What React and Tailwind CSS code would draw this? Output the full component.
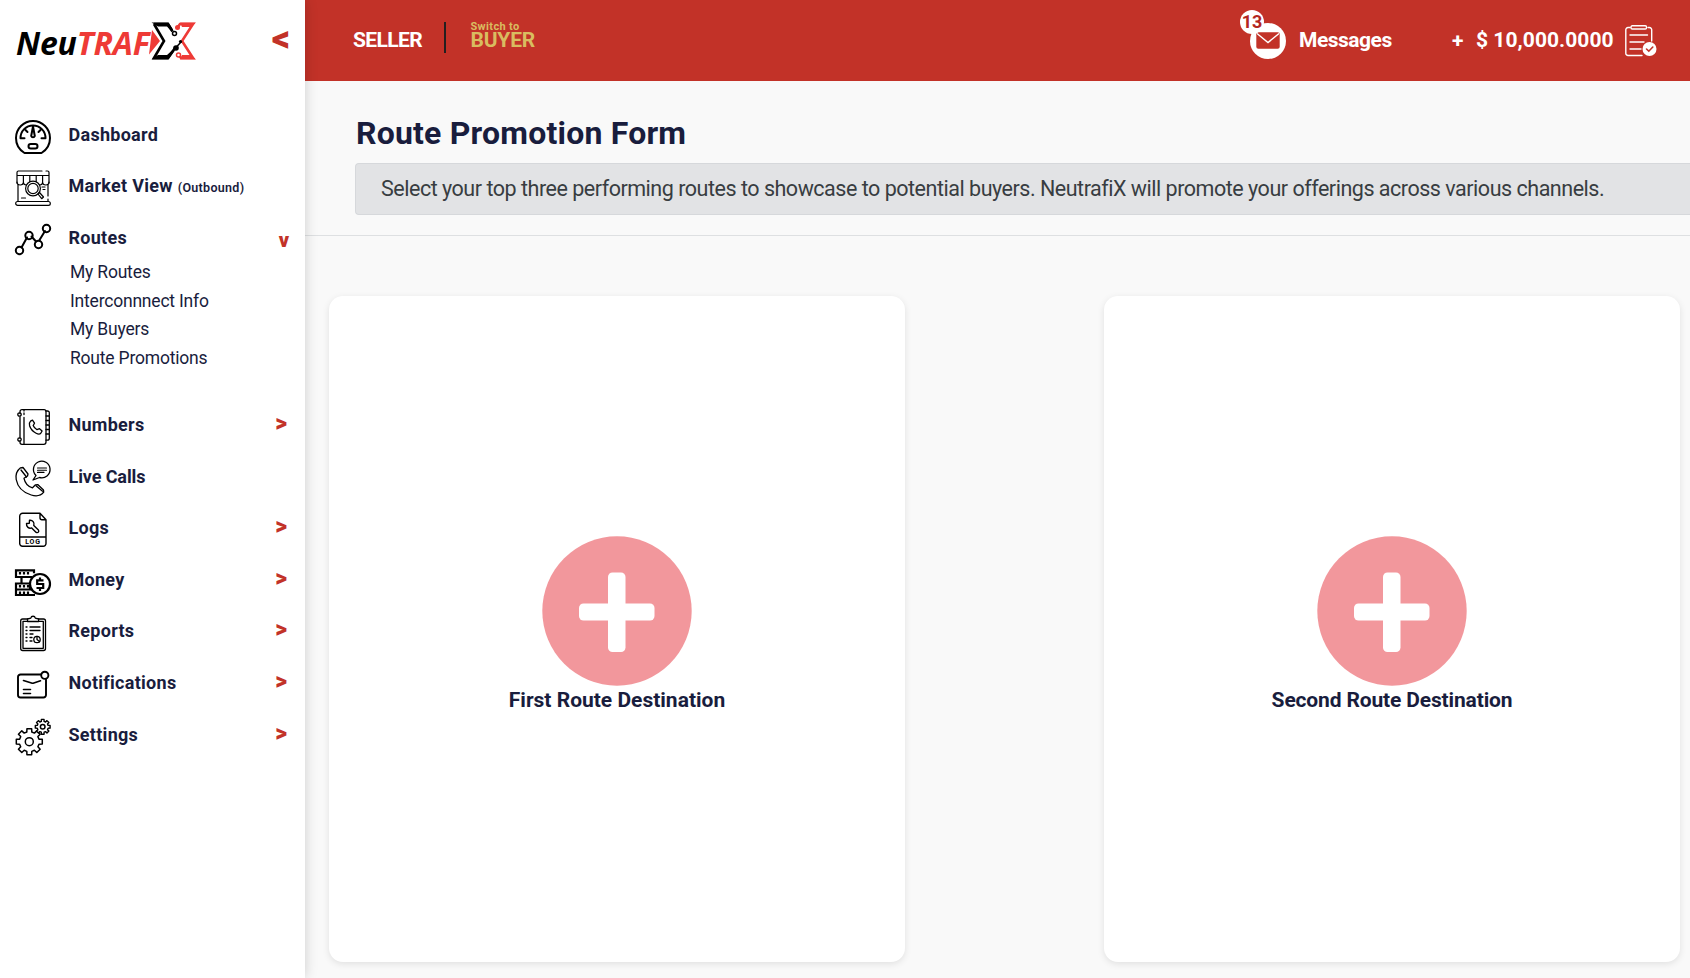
import React from "react";

const Svg = ({children, size = 36, sw = 1.4}) => (
  <svg width={size} height={size} viewBox={`0 0 ${size} ${size}`} fill="none" stroke="#000" strokeWidth={sw} strokeLinecap="round" strokeLinejoin="round" className="shrink-0 overflow-visible">
    {children}
  </svg>
);

const DashboardIcon = () => (
  <Svg sw={2}>
    <path d="M9.5 34C4.500 31 1 25.500 1 19a17 17 0 0 1 34 0c0 6.500-3.500 12-8.500 15z" />
    <path d="M5.500 19.300h4M30.500 19.300h-4M5.500 19.300C5.500 12 11 6.500 18 6.500S30.500 12 30.500 19.300M10.500 11l2 2M25.500 11l-2 2" />
    <path d="M18 7.500l-1.800 9.500a1.900 1.900 0 0 0 3.600 0z" />
    <rect x="13.500" y="25" width="9" height="4.600" rx="2.300" />
  </Svg>
);

const MarketIcon = () => (
  <Svg sw={1.2}>
    <path d="M3 1h24M31 1h1.500a1.500 1.500 0 0 1 1.500 1.500V13M2 13V2.500A1.500 1.500 0 0 1 3.500 1M2 5.500h32" />
    <path d="M2 12c0 4 6.400 4 6.400 0V5.500M8.400 12c0 4 6.400 4 6.400 0V5.500M14.800 11c0 2 6.400 2 6.400 0V5.500M21.200 12c0 4 6.400 4 6.400 0V5.500M27.600 12c0 4 6.400 4 6.400 0" />
    <path d="M3 15v16.500M33 15v11M33 29v2.500M6.500 28h4M27 17h3M28 19.500h2" />
    <rect x=".7" y="31.500" width="34.600" height="3.800" rx="1.900" />
    <circle cx="18" cy="18.500" r="7.400" fill="#fff" />
    <circle cx="18" cy="18.500" r="5.200" />
    <path d="M23 24l1.500-1.500L28.500 27l-1.800 1.700z" />
  </Svg>
);

const RoutesIcon = () => (
  <Svg sw={2}>
    <g transform="translate(0 1)">
      <path d="M6.500 24.500L12 14.500M16.500 13.500L21 18.500M24.500 17L30 8" />
      <circle cx="4.500" cy="27.500" r="3.700" />
      <circle cx="14" cy="12.500" r="3.700" />
      <circle cx="23.500" cy="21.500" r="3.700" />
      <circle cx="31.500" cy="5.500" r="3.700" />
    </g>
  </Svg>
);

const NumbersIcon = () => (
  <Svg sw={1.3}>
    <path d="M5 4.500V2.700A2 2 0 0 1 7 .7h22a2 2 0 0 1 2 2V33a2.300 2.300 0 0 1-2.300 2.300H7a2 2 0 0 1-2-2V32M5 8v21M9 8.500V35" />
    <path d="M9 1v1M9 4v1.500" />
    <path d="M31 2h1.500a1.800 1.800 0 0 1 1.800 1.800v25.400a2 2 0 0 1-2 2H31M31 7h3M31 11.500h3M31 16h3M31 20.500h3M31 25h3" />
    <circle cx="4.500" cy="5.500" r="1.700" />
    <circle cx="4.500" cy="30.500" r="1.700" />
    <path d="M15.500 12.200l2-1 2 3-1.300 2.300c.8 2 2 3.200 3.800 4.200l2.500-1 2.600 2.300-1.500 2.500c-1.200 1-3 .5-4.500-.3-3-1.600-5.500-4.300-6.500-7.500-.5-1.900-.2-3.500.9-4.500z" />
  </Svg>
);

const CallsIcon = () => (
  <Svg sw={1.3}>
    <path d="M5.500 6.800L8 6.500l5 6.500-.5 2-3.500 2.300c1 4.700 4 8.200 8.500 9.500l3-3 2.200-.2 5.800 5.400.2 2.200c-2.500 3.200-7.500 4.300-12.500 2.800C8 31.500 2.500 25.500 1.200 18.500.5 14 2 9.500 5.500 6.800z" />
    <path d="M6 9l5.500 7M21 24.800l6.500 5.400" />
    <path d="M21 14.500l-3 4.500 6.500-2.500A8.300 8.300 0 1 0 21 14.500z" />
    <path d="M22.500 7h9M22.500 9.200h9M22.500 11.400h6.500" strokeWidth="1.100" />
  </Svg>
);

const LogsIcon = () => (
  <Svg sw={1.4}>
    <path d="M8 1.200h17l6 6.500V31.500a2.800 2.800 0 0 1-2.800 2.800H7.500a2.800 2.800 0 0 1-2.800-2.800V4.200a3 3 0 0 1 3.300-3zM25 1.500v4.200a2 2 0 0 0 2 2h4M5 25h26" />
    <path d="M14.500 8.300l-.2 3-2.800.2c-.4 3.300 2.500 5.500 5.200 4.400l4.500 4.500c1.800.8 3.200-.8 2.200-2.400l-4.600-4.500c1-3-1.300-5.700-4.300-5.200z" />
    <text x="18" y="32.300" textAnchor="middle" className="font-['Roboto',sans-serif] text-[7px] font-bold tracking-[0.8px]" fill="#000" stroke="none">LOG</text>
  </Svg>
);

const MoneyIcon = () => (
  <Svg sw={2.2}>
    <g strokeLinecap="butt" strokeLinejoin="miter">
      <path d="M17 13H1V6.300h18v3M6.500 13v6M1 19.500h14v6H1zM1 25.500v5.500h19" />
      <path d="M5 8v2.500M9 8v2.500M13 8v2.500M5 21v2.500M9 21v2.500M13 21v2.500M5 30v-2.500M9 30v-2.500M13 30v-2.500" />
      <circle cx="25" cy="20" r="10" fill="#fff" />
      <path d="M28.500 16.300h-6.300v3.700h6v4h-6.700M25 13.500v3M25 24v3" />
    </g>
  </Svg>
);

const ReportsIcon = () => (
  <Svg sw={1.3}>
    <g transform="translate(0 .5)">
      <rect x="5.700" y="3.500" width="24.800" height="31.500" rx="2" />
      <path d="M12 5.800H8v27h20.300v-27h-4" />
      <path d="M12.500 6V3.500l3.300-.8c.5-2.600 4-2.600 4.500 0l3.300.8V6z" fill="#fff" />
      <path d="M11 11.500h1M15 11.500h10M11 15h1M15 15h10M11 18.500h1M15 18.500h3M11 22h1M15 22h2M11 25.500h1M15 25.500h2" />
      <circle cx="22" cy="24" r="3.200" />
      <path d="M22 20.800V24l2.500 2" />
    </g>
  </Svg>
);

const NotificationsIcon = () => (
  <Svg sw={1.9}>
    <g transform="translate(0 2.500)">
      <path d="M26 5H5.500A2.500 2.500 0 0 0 3 7.500v18A2.500 2.500 0 0 0 5.500 28h23a2.500 2.500 0 0 0 2.500-2.500V10" />
      <circle cx="29.800" cy="5.800" r="3.600" />
      <path d="M8.500 11l8 2.500c.8.300 1.500.3 2.300 0l6.700-2.300M8.500 20h7M8.500 24h7" strokeWidth="1.600" />
    </g>
  </Svg>
);

// outline of a cog with the given number of teeth, outer radius ro and root radius ri
const cog = (cx, cy, ro, ri, teeth) => {
  const points = [];
  const step = (2 * Math.PI) / teeth;
  for (let i = 0; i < teeth; i++) {
    [[-0.32, ri], [-0.23, ro], [0.23, ro], [0.32, ri]].forEach(([d, r]) => {
      const a = (i + d) * step;
      points.push(`${(cx + r * Math.sin(a)).toFixed(2)} ${(cy - r * Math.cos(a)).toFixed(2)}`);
    });
  }
  return `M${points.join("L")}Z`;
};

const SettingsIcon = () => (
  <Svg sw={1.5}>
    <path d={cog(14.3, 22.7, 13.2, 10, 8)} />
    <circle cx="14.300" cy="22.700" r="4" />
    <path d={cog(27.7, 7.8, 7.5, 5.6, 8)} fill="#fff" strokeWidth="1.400" />
    <circle cx="27.700" cy="7.800" r="2.300" />
  </Svg>
);

const routeLinks = ["My Routes", "Interconnnect Info", "My Buyers", "Route Promotions"];

const topItems = [
  {name: "Dashboard", icon: DashboardIcon},
  {name: "Market View", note: "(Outbound)", icon: MarketIcon},
  {name: "Routes", icon: RoutesIcon, open: true}
];

const bottomItems = [
  {name: "Numbers", icon: NumbersIcon, arrow: true},
  {name: "Live Calls", icon: CallsIcon, track: "tracking-[-0.1px]"},
  {name: "Logs", icon: LogsIcon, arrow: true},
  {name: "Money", icon: MoneyIcon, arrow: true},
  {name: "Reports", icon: ReportsIcon, arrow: true},
  {name: "Notifications", icon: NotificationsIcon, arrow: true},
  {name: "Settings", icon: SettingsIcon, arrow: true}
];

const NavItem = ({item}) => {
  const Icon = item.icon;
  return (
    <div className="flex h-[51.6px] items-center pl-[15px] pr-[18px]">
      <Icon />
      <span className={`ml-[17.5px] pb-[5px] text-[18px] font-bold whitespace-nowrap ${item.track || "tracking-[0.28px]"}`}>
        {item.name}
        {item.note && <span className="ml-[5px] text-[12.5px] font-semibold tracking-[0.3px]">{item.note}</span>}
      </span>
      {item.arrow && <span className="ml-auto pb-[7px] text-[23px] leading-none font-black text-[#c23228]">&gt;</span>}
      {item.open && <span className="ml-auto -mr-0.5 text-[20px] leading-none font-black text-[#c23228]">v</span>}
    </div>
  );
};

const Logo = () => (
  <div className="flex items-center">
    <span className="pt-1 font-['Open_Sans',sans-serif] text-[32px] leading-none font-bold italic tracking-[-0.2px] text-black">
      Neu<span className="text-[#ee3a36]">TRAF</span>
    </span>
    <svg width="48" height="38" viewBox="0 0 48 38" fill="none" className="mt-px">
      <path d="M3 8l8 11L0 32.500z" fill="#ee3a36" />
      <path d="M5 2h14l4.500 7.500M5 2l10 17L5 36h14l7-10" stroke="#000" strokeWidth="2.600" />
      <path d="M2.500.500h17l4.500 7-2 1.500-4-4.500H9zM2.500 37.500h17l6-8.500-2-1-5.500 5H9z" fill="#000" />
      <path d="M28.500 5.500L31 2h13L33 19l11 17H32l-2-3" stroke="#ee3a36" strokeWidth="2.600" />
      <path d="M31 .500h16l-5 4.500H33zM31 37.500h16l-5-4.500H33z" fill="#ee3a36" />
      <path d="M26.500 26l6-6.500" stroke="#000" strokeWidth="1.500" />
      <circle cx="25.500" cy="11.500" r="2" fill="#fff" stroke="#000" strokeWidth="1.500" />
      <circle cx="28.500" cy="5.500" r="2.500" fill="#ee3a36" />
      <circle cx="27" cy="26" r="2.800" fill="#000" />
      <circle cx="31.500" cy="19.500" r="1.600" fill="#000" />
      <circle cx="29.500" cy="33" r="2" fill="#fff" stroke="#ee3a36" strokeWidth="1.500" />
    </svg>
  </div>
);

const Sidebar = () => (
  <aside className="relative z-10 flex w-[305px] shrink-0 flex-col bg-white shadow-[0_0_12px_rgba(0,0,0,0.18)]">
    <div className="flex h-[81px] shrink-0 items-center justify-between pl-4 pr-[15px]">
      <Logo />
      <span className="pb-[3px] text-[36px] leading-none font-black text-[#c23228]">&lt;</span>
    </div>
    <nav className="pt-[30px]">
      {topItems.map((item) => <NavItem key={item.name} item={item} />)}
      <ul className="-mt-2 mb-[29px] pl-[70px]">
        {routeLinks.map((link) => (
          <li key={link} className="flex h-[28.6px] items-center text-[17.5px] font-normal tracking-[-0.2px]">{link}</li>
        ))}
      </ul>
      {bottomItems.map((item) => <NavItem key={item.name} item={item} />)}
    </nav>
  </aside>
);

const Header = () => (
  <header className="flex h-[81px] shrink-0 items-center bg-[#c23228] pl-12 pr-[33px] text-[21px] font-bold text-white">
    <span className="w-[69px] leading-none tracking-[-0.6px]">SELLER</span>
    <span className="ml-[22px] -mt-1.5 h-[31px] w-0.5 bg-[#231f20]" />
    <div className="ml-[24.5px] -mt-[13px] flex flex-col text-[#d9bc60]">
      <span className="text-[11px] leading-[11px] tracking-[0.35px]">Switch to</span>
      <span className="leading-[16px] tracking-[-0.2px]">BUYER</span>
    </div>
    <div className="ml-auto flex items-center">
      <div className="relative flex size-9 items-center justify-center rounded-full bg-white">
        <svg width="24" height="17" viewBox="0 0 24 17" fill="none">
          <rect x=".3" y=".3" width="23.400" height="16.400" rx="2" fill="#c23228" />
          <path d="M1 1.500l11 9 11-9" stroke="#fff" strokeWidth="1.400" />
        </svg>
        <span className="absolute -left-2.5 -top-[13px] flex size-6 items-center justify-center rounded-full bg-white text-[18px] leading-none font-bold text-[#b3261e]">13</span>
      </div>
      <span className="ml-[13px] w-[93px] tracking-[-0.5px]">Messages</span>
    </div>
    <span className="ml-[60px] w-6 pt-0.5 text-[21px] leading-none">+</span>
    <span className="w-[138px] tracking-[0.05px] whitespace-nowrap">$ 10,000.0000</span>
    <svg width="32" height="32" viewBox="0 0 32 32" fill="none" stroke="#fff" strokeWidth="1.400" strokeLinecap="round" className="ml-[11px]">
      <path d="M5 2.500H3A2.200 2.200 0 0 0 .8 4.700v23.500a2.200 2.200 0 0 0 2.200 2.300h14M23 2.500h1.500a2.200 2.200 0 0 1 2.200 2.200V16" />
      <rect x="6" y=".8" width="15.500" height="3.200" rx="1.200" />
      <path d="M5 10h17.500M5 17h14M5 24h11" />
      <circle cx="24.500" cy="24" r="7" fill="#fff" stroke="none" />
      <path d="M21.500 24l2.300 2.200 4-4.200" stroke="#c23228" strokeWidth="1.600" />
    </svg>
  </header>
);

const RouteCard = ({label, track}) => (
  <div className="flex h-[666px] w-[576px] shrink-0 flex-col items-center rounded-[14px] bg-white pt-60 shadow-[0_2px_7px_rgba(0,0,0,0.1)]">
    <svg width="150" height="150" viewBox="0 0 150 150">
      <circle cx="75" cy="75" r="74.700" fill="#f2979c" />
      <rect x="66" y="36.500" width="17.500" height="79.500" rx="4.500" fill="#fff" />
      <rect x="37" y="67.500" width="75.500" height="17" rx="4.500" fill="#fff" />
    </svg>
    <span className={`text-[21px] leading-[28px] font-bold whitespace-nowrap ${track}`}>{label}</span>
  </div>
);

const App = () => {
  return (
    <div className="flex h-[978px] overflow-hidden bg-[#f9f9f9] font-['Roboto',sans-serif] text-[#191d3d]">
      <Sidebar />
      <div className="flex min-w-0 grow flex-col">
        <Header />
        <section className="border-b border-[#dee0e2] pt-8 pb-5 pl-[51px]">
          <h1 className="text-[32px] leading-[40px] font-bold tracking-[0.2px]">Route Promotion Form</h1>
          <div className="-ml-px mt-2.5 flex h-[52px] items-center rounded-l border border-r-0 border-[#d6d8db] bg-[#e2e3e5] pl-[25px] text-[21.5px] font-normal tracking-[-0.48px] whitespace-nowrap text-[#383d41]">
            Select your top three performing routes to showcase to potential buyers. NeutrafiX will promote your offerings across various channels.
          </div>
        </section>
        <main className="flex gap-[199px] pt-[60px] pl-6">
          <RouteCard label="First Route Destination" track="tracking-[0px]" />
          <RouteCard label="Second Route Destination" track="tracking-[-0.15px]" />
        </main>
      </div>
    </div>
  );
};

export default App;
